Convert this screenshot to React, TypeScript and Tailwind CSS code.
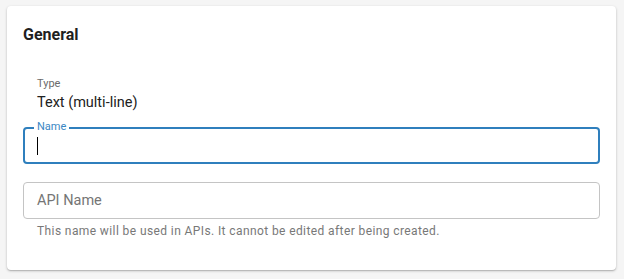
import React from "react";

export default function App() {
  return (
    <div className="min-h-[279px] w-[624px] bg-[#f5f5f5] pt-[6px] pl-[7px] pr-[8px] pb-[9px]" style={{ fontFamily: "Roboto, 'Liberation Sans', sans-serif" }}>
      <div className="rounded-[4px] bg-white shadow-[0_1px_3px_rgba(0,0,0,0.2),0_1px_1px_rgba(0,0,0,0.14)] h-[264px] px-[16px] pt-[17px]">
        <h2 className="text-[16px] font-bold leading-[24px] text-[#1f1f1f]">General</h2>
        <div className="mt-[30px] pl-[14px]">
          <div className="mb-[2px] text-[11px] leading-[14px] text-[#6b6b6b]">Type</div>
          <div className="text-[14.5px] leading-[20px] text-[#212121]">Text (multi-line)</div>
        </div>
        <div className="relative mt-[14px]">
          <div className="h-[37px] rounded-[4px] border-2 border-[#2f7fbd]" />
          <span className="absolute left-[11px] top-[-7px] bg-white px-[3px] text-[11px] leading-[14px] text-[#3a87c4]">Name</span>
          <span className="absolute left-[14px] top-[10px] h-[18px] w-[1px] bg-black" />
        </div>
        <div className="mt-[18px]">
          <div className="flex h-[37px] items-center rounded-[4px] border border-[#c4c4c4] px-[13px] text-[14.5px] text-[#757575]">API Name</div>
          <div className="mt-[4px] pl-[14px] text-[12px] leading-[16px] tracking-[0.4px] text-[#787878]">This name will be used in APIs. It cannot be edited after being created.</div>
        </div>
      </div>
    </div>
  );
}
